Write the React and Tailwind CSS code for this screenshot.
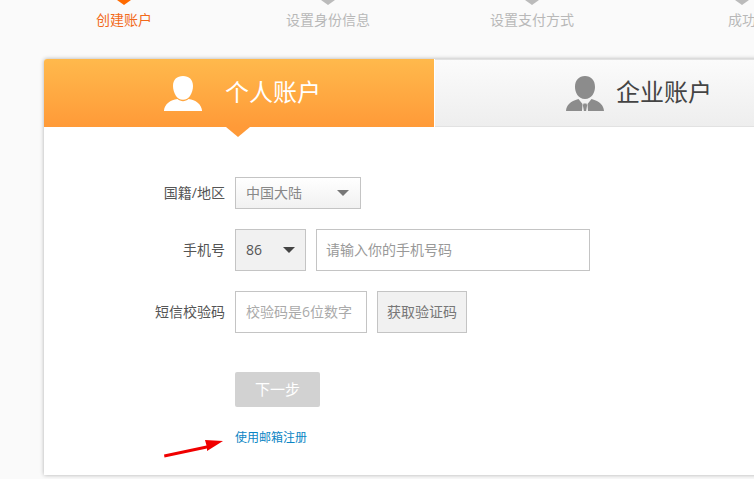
const cjk = "font-['Open_Sans','Noto_Sans_CJK_SC',sans-serif]";

function Step({ label, active, width }) {
  return (
    <div className={`flex shrink-0 flex-col items-center ${width}`}>
      <svg width="14" height="5" className="block">
        <polygon points="0,0 14,0 7,5" fill={active ? "#ff6a00" : "#bbbbbb"} />
      </svg>
      <div className={`mt-[5px] text-[14px] leading-[20px] whitespace-nowrap ${active ? "text-[#f26a1b]" : "text-[#b8b8b8]"}`}>{label}</div>
    </div>
  );
}

function Person({ fill }) {
  return (
    <svg width="38" height="35" viewBox="0 0 38 35" className="block">
      <path fill={fill} d="M19 0c6 0 10 3.500 10 10 0 3-1 7-3 10-1.500 2.300-4 3.800-7 3.800s-5.500-1.500-7-3.800c-2-3-3-7-3-10C9 3.500 13 0 19 0z" />
      <path fill={fill} d="M13.500 23c1.500 1.400 3.500 2.200 5.500 2.200s4-.8 5.500-2.200c7 1 13 5 13.500 11.600V35H0v-.4C.500 28 6.500 24 13.500 23z" />
    </svg>
  );
}

function Business() {
  return (
    <svg width="38" height="35" viewBox="0 0 38 35" className="block">
      <path fill="#8c8c8c" d="M19 0c6 0 10 4 10 11 0 5-3 12-10 12S9 16 9 11C9 4 13 0 19 0zM12.500 23l4 5-.500 7H0c.500-6 4-9.500 12.500-12zM25.500 23c8.500 2.500 12 6 12.500 12H22l-.500-7 4-5z" />
      <path fill="#8c8c8c" d="M17.500 27.500h3l.6 2-1 5.500h-2.200l-1-5.500z" />
    </svg>
  );
}

function Row({ label, children, className }) {
  return (
    <div className={`flex items-center ${className}`}>
      <div className="w-[191px] -translate-y-px pr-[10px] text-right text-[14px] text-[#555]">{label}</div>
      <div className="flex gap-[10px]">{children}</div>
    </div>
  );
}

function Caret({ color }) {
  return <div className="h-0 w-0 border-x-[6px] border-t-[6px] border-x-transparent" style={{ borderTopColor: color }} />;
}

export default function App() {
  return (
    <div className={`relative h-[479px] w-[754px] overflow-hidden bg-[#fafafa] ${cjk}`}>
      <div className="flex h-[59px] pl-[22px]">
        <Step label="创建账户" active width="w-[204px]" />
        <Step label="设置身份信息" width="w-[204px]" />
        <Step label="设置支付方式" width="w-[204px]" />
        <Step label="成功" width="w-[216px]" />
      </div>

      <div className="relative ml-[44px] h-[416px] w-[780px] rounded-t-[3px] bg-white shadow-[0_0_4px_rgba(0,0,0,0.3)]">
        <div className="flex h-[68px]">
          <div className="relative flex w-[390px] items-center rounded-tl-[3px] bg-linear-to-b from-[#ffb94c] to-[#ff9a38] pl-[120px]">
            <Person fill="#ffffff" />
            <span className="ml-[23px] -translate-y-px text-[24px] text-white">个人账户</span>
            <div className="absolute left-[182px] top-[68px] h-0 w-0 border-x-[12px] border-t-[10px] border-x-transparent border-t-[#ff9a38]" />
          </div>
          <div className="ml-px flex flex-1 items-center border-y border-[#e2e2e2] bg-linear-to-b from-[#fbfbfb] to-[#eeeeee] pl-[131px]">
            <Business />
            <span className="ml-[12px] -translate-y-px text-[24px] text-[#444]">企业账户</span>
          </div>
        </div>

        <div className="pt-[50px]">
          <Row label="国籍/地区" className="h-[32px]">
            <div className="flex h-[32px] w-[126px] items-center justify-between border border-[#c4c4c4] bg-linear-to-b from-[#ffffff] to-[#f1f1f1] pl-[10px] pr-[11px] text-[14px] text-[#888]">
              <span className="-translate-y-px">中国大陆</span>
              <Caret color="#777" />
            </div>
          </Row>
          <Row label="手机号" className="mt-[20px] h-[42px]">
            <div className="flex h-[42px] w-[71px] items-center justify-between border border-[#c4c4c4] bg-[#f1f1f1] pl-[10px] pr-[10px] text-[14px] text-[#555]">
              <span className="-translate-y-px">86</span>
              <Caret color="#444" />
            </div>
            <input readOnly placeholder="请输入你的手机号码" className="h-[42px] w-[274px] border border-[#c4c4c4] bg-white pb-[2px] pl-[9px] text-[14px] outline-none placeholder:text-[#999]" />
          </Row>
          <Row label="短信校验码" className="mt-[20px] h-[42px]">
            <input readOnly placeholder="校验码是6位数字" className="h-[42px] w-[132px] border border-[#c4c4c4] bg-white pb-[2px] pl-[10px] text-[14px] outline-none placeholder:text-[#aaa]" />
            <div className="flex h-[42px] w-[90px] items-center justify-center border border-[#c4c4c4] bg-[#f1f1f1] pb-[2px] text-[14px] text-[#777]">获取验证码</div>
          </Row>
          <div className="mt-[39px] pl-[191px]">
            <div className="flex h-[35px] w-[85px] items-center justify-center rounded-[2px] bg-[#d2d2d2] text-[15px] text-white">下一步</div>
            <div className="mt-[21px] text-[12px] leading-[20px] text-[#0b85c4]">使用邮箱注册</div>
          </div>
        </div>
      </div>

      <svg width="62" height="20" viewBox="0 0 62 20" className="absolute left-[163px] top-[439px]">
        <polygon points="1,15.500 43.500,6.500 42,1 60,2 44,12 44,9.500 1.500,18.500" fill="#f00000" />
      </svg>
    </div>
  );
}
